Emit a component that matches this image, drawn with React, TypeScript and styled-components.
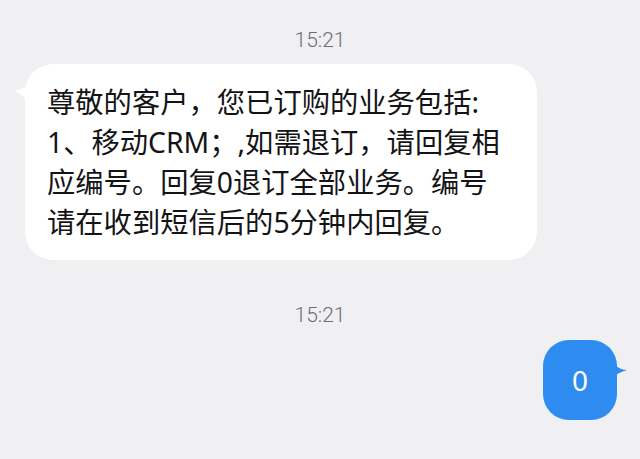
import styled, { createGlobalStyle } from 'styled-components';

const GlobalStyle = createGlobalStyle`
  html, body {
    margin: 0;
    padding: 0;
    background: #f0eff2;
  }

  body {
    font-family: "Noto Sans", "Noto Sans CJK SC", sans-serif;
  }
`;

const ChatLayout = styled.div`
  display: flex;
  flex-direction: column;
  width: 640px;
  height: 459px;
  padding-top: 27px;
  box-sizing: border-box;
  background: #f0eff2;
  overflow: hidden;
`;

const TimeStamp = styled.div<{ $gap: number }>`
  text-align: center;
  font-family: Roboto, "Noto Sans", sans-serif;
  font-weight: 300;
  font-size: 21px;
  line-height: 26px;
  color: #6e6e72;
  margin-top: ${({ $gap }) => $gap}px;
`;

const MessageRow = styled.div<{ $mine?: boolean }>`
  display: flex;
  justify-content: ${({ $mine }) => ($mine ? 'flex-end' : 'flex-start')};
  padding: ${({ $mine }) => ($mine ? '0 23px 0 0' : '0 0 0 25px')};
  margin-top: ${({ $mine }) => ($mine ? 12 : 11)}px;
`;

const ReceivedBubble = styled.div`
  position: relative;
  width: 512px;
  box-sizing: border-box;
  padding: 18px 10px 18px 22px;
  background: #ffffff;
  border-radius: 28px;
  font-family: "Noto Sans", "Noto Sans CJK SC", sans-serif;
  font-size: 28.3px;
  line-height: 40px;
  color: #141416;
`;

const SentBubble = styled.div`
  position: relative;
  display: flex;
  align-items: center;
  justify-content: center;
  width: 74px;
  height: 80px;
  background: #2e8cf0;
  border-radius: 26px;
  font-family: "Noto Sans", Roboto, sans-serif;
  font-size: 28px;
  color: #ffffff;
`;

const Tail = styled.svg<{ $side: 'left' | 'right' }>`
  position: absolute;
  top: 18px;
  ${({ $side }) => ($side === 'left' ? 'left: -12px;' : 'right: -10px;')}
  width: 16px;
  height: 20px;
`;

const Line = styled.div`
  white-space: nowrap;
`;

const lines = [
  '尊敬的客户，您已订购的业务包括:',
  '1、移动CRM；,如需退订，请回复相',
  '应编号。回复0退订全部业务。编号',
  '请在收到短信后的5分钟内回复。',
];

const App = () => {
  return (
    <ChatLayout>
      <GlobalStyle />
      <TimeStamp $gap={0}>15:21</TimeStamp>
      <MessageRow>
        <ReceivedBubble>
          <Tail $side="left" viewBox="0 0 16 20">
            <path d="M16 2 C12 6 6 8 1 8 C6 11 11 15 16 20 Z" fill="#ffffff" />
          </Tail>
          {lines.map((line) => (
            <Line key={line}>{line}</Line>
          ))}
        </ReceivedBubble>
      </MessageRow>
      <TimeStamp $gap={42}>15:21</TimeStamp>
      <MessageRow $mine>
        <SentBubble>
          <Tail $side="right" viewBox="0 0 16 20">
            <path d="M0 0 C3 7 8 12 16 12 C9 14 4 17 0 20 Z" fill="#2e8cf0" />
          </Tail>
          0
        </SentBubble>
      </MessageRow>
    </ChatLayout>
  );
};

export default App;
